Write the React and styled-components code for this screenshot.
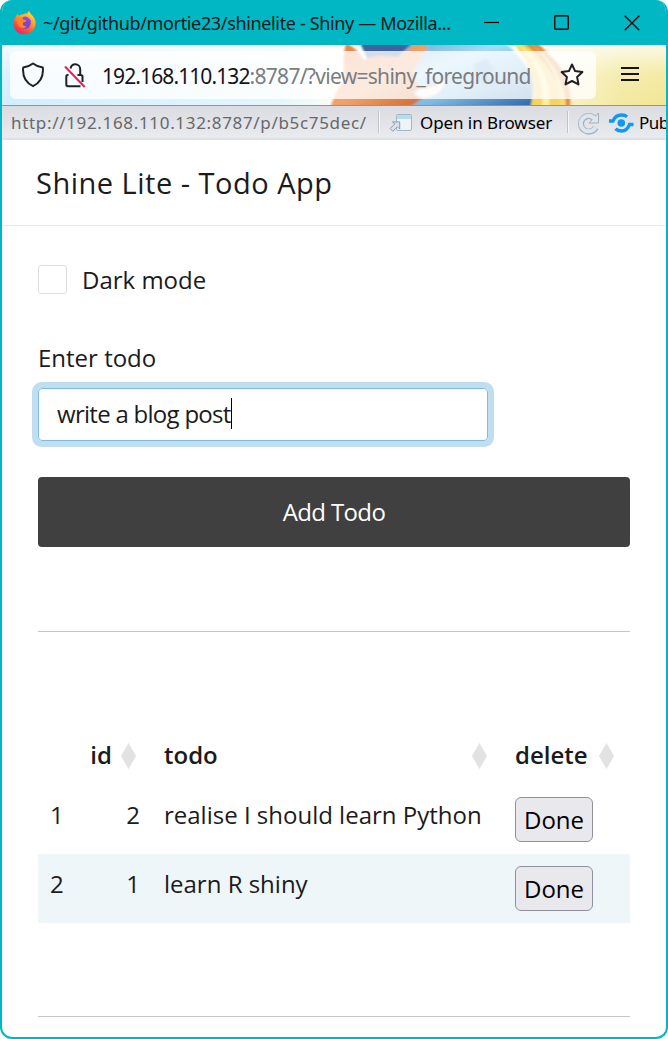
import React from "react";
import styled, { createGlobalStyle } from "styled-components";

const TEAL = "#00b7c3";

const GlobalStyle = createGlobalStyle`
  *, *::before, *::after { box-sizing: border-box; }
  html, body { margin: 0; padding: 0; background: #fff; overflow: hidden; }
  body { font-family: "Open Sans", "Noto Sans", sans-serif; color: #1b1b1b; }
  svg { display: block; flex: none; }
`;

const Window = styled.div`
  width: 668px;
  height: 1039px;
  display: flex;
  flex-direction: column;
  border: 2px solid ${TEAL};
  border-top: 0;
  border-radius: 12px;
  background: #fff;
  overflow: hidden;
`;

const TitleBar = styled.header`
  height: 45px;
  flex: none;
  display: flex;
  align-items: center;
  margin: 0 -2px;
  padding-left: 13px;
  background: ${TEAL};
`;

const WindowTitle = styled.div`
  width: 418px;
  margin-left: 7px;
  font-family: "Noto Sans", sans-serif;
  font-size: 18px;
  line-height: 24px;
  letter-spacing: -0.35px;
  color: #0b1a1c;
  white-space: nowrap;
`;

const WindowControls = styled.div`
  display: flex;
  align-items: center;
  gap: 55px;
  margin-left: 23px;
`;

const AddressBar = styled.div`
  position: relative;
  height: 61px;
  flex: none;
  display: flex;
  align-items: center;
  padding: 0 27px 0 8px;
  border-bottom: 1px solid #8d969e;
`;

const ThemeArt = styled.svg`
  position: absolute;
  inset: 0;
`;

const UrlField = styled.div`
  position: relative;
  width: 586px;
  height: 48px;
  display: flex;
  align-items: center;
  padding: 0 12px 0 11px;
  border-radius: 6px;
  background: rgba(255, 255, 255, 0.78);
`;

const UrlText = styled.div`
  flex: 1;
  margin: 2px 0 0 16px;
  font-family: "Noto Sans", sans-serif;
  font-size: 21px;
  line-height: 28px;
  letter-spacing: -0.7px;
  white-space: nowrap;
  color: #7b7c80;
`;

const Host = styled.span`
  color: #15141a;
  letter-spacing: -0.9px;
`;

const MenuButton = styled.div`
  position: relative;
  margin: 0 0 2px auto;
`;

const ViewerBar = styled.div`
  height: 34px;
  flex: none;
  display: flex;
  align-items: center;
  padding-left: 9px;
  background: linear-gradient(#dbdce1, #e9ebef);
  border-bottom: 2px solid #dde0e5;
  font-family: "Noto Sans", sans-serif;
  font-size: 17px;
  line-height: 24px;
  color: #000;
  white-space: nowrap;
  overflow: hidden;
`;

const ViewerText = styled.span`
  flex: none;
  width: ${(p) => p.$width}px;
  padding-top: 2px;
  color: ${(p) => p.$color || "#000"};
  letter-spacing: ${(p) => p.$spacing || 0}px;
`;

const Divider = styled.i`
  width: 2px;
  height: 22px;
  flex: none;
  border-left: 1px solid #c0c3c8;
  border-right: 1px solid #f4f5f7;
`;

const IconSlot = styled.span`
  flex: none;
  margin: 2px ${(p) => p.$right}px 0 ${(p) => p.$left}px;
`;

const AppHeader = styled.h1`
  height: 86px;
  flex: none;
  margin: 0;
  padding: 0 34px;
  border-bottom: 1px solid #e7e9ee;
  font-size: 29px;
  font-weight: 400;
  line-height: 86px;
  letter-spacing: 0.5px;
`;

const Main = styled.main`
  display: flex;
  flex-direction: column;
  padding: 39px 36px 0;
  font-size: 24px;
`;

const CheckRow = styled.label`
  display: flex;
  align-items: center;
  gap: 15px;
  height: 29px;
  line-height: 32px;
`;

const Checkbox = styled.span`
  width: 29px;
  height: 29px;
  border: 1px solid #dcdee4;
  border-radius: 3px;
`;

const CheckText = styled.span`
  padding-top: 1px;
`;

const FieldLabel = styled.label`
  margin-top: 47px;
  line-height: 34px;
`;

const TextField = styled.div`
  width: 450px;
  height: 53px;
  margin-top: 13px;
  display: flex;
  align-items: center;
  padding: 0 0 2px 18px;
  border: 1px solid #7fbbe0;
  border-radius: 4px;
  box-shadow: 0 0 0 6px #bfdff0;
  letter-spacing: -0.72px;
`;

const Caret = styled.i`
  width: 1px;
  height: 31px;
  background: #000;
`;

const SubmitButton = styled.button`
  height: 70px;
  margin-top: 36px;
  border: 0;
  border-radius: 4px;
  background: #404040;
  color: #fff;
  font: 400 24px/34px "Open Sans", sans-serif;
  letter-spacing: -0.65px;
`;

const Rule = styled.hr`
  width: 100%;
  height: 1px;
  margin: ${(p) => p.$top}px 0 0;
  border: 0;
  background: #c6c6c6;
`;

const Table = styled.table`
  width: 592px;
  margin-top: 94px;
  border-collapse: collapse;
  table-layout: fixed;
`;

const HeadRow = styled.tr`
  height: 59px;
`;

const HeadCell = styled.th`
  width: ${(p) => p.$width}px;
  padding: 0 ${(p) => p.$right || 0}px 0 12px;
  font-weight: 600;
  line-height: 34px;
  text-align: left;
`;

const HeadContent = styled.div`
  display: flex;
  align-items: center;
  gap: 9px;
  justify-content: ${(p) => p.$justify};
`;

const HeadLabel = styled.span`
  margin-top: -2px;
`;

const BodyRow = styled.tr`
  height: 69px;
  background: ${(p) => (p.$striped ? "#eef6fa" : "transparent")};
`;

const Cell = styled.td`
  padding: 13px 12px 0;
  line-height: 34px;
  vertical-align: top;
  white-space: nowrap;
  text-align: ${(p) => p.$align || "left"};
`;

const ActionCell = styled.td`
  padding: 12px 12px 0;
  vertical-align: top;
`;

const DoneButton = styled.button`
  display: block;
  width: 78px;
  height: 45px;
  padding: 1px 0 0;
  border: 1px solid #8f8f9d;
  border-radius: 6px;
  background: #e9e9ed;
  color: #000;
  font: 400 24px/34px "Open Sans", sans-serif;
`;

const Firefox = () => (
  <svg width="23" height="24" viewBox="0 0 23 24">
    <defs>
      <linearGradient id="flame" x1="0.85" y1="0.05" x2="0.3" y2="1">
        <stop offset="0" stopColor="#ffe43b" />
        <stop offset="0.4" stopColor="#ff9a28" />
        <stop offset="0.75" stopColor="#ff4a3d" />
        <stop offset="1" stopColor="#ed1f73" />
      </linearGradient>
    </defs>
    <path d="M3.200 5c.2-1 .8-2 1.500-2.600.1 1 .6 1.600 1.200 2.300 1-.8 2.500-1.400 4-1.500C11.300 2.500 13 2.200 14.500 2.500 14.600 1.500 15.400.6 16.200 0c.2 3.200 4.800 4 6.100 9.500C23.800 17 18.500 23.300 11.500 23.300 4.800 23.300.3 18 .4 12.500.5 9.500 1.500 6.800 3.200 5Z" fill="url(#flame)" />
    <circle cx="12" cy="12.300" r="5.600" fill="#7a45d8" />
    <path d="M10 7c3-1.500 7 .6 7.400 4.500" fill="none" stroke="#a04ae8" strokeWidth="1.800" />
    <path d="M3 8c2.500-2 5.500-1.300 7.600.6 1.700.1 2.800.5 2.900 1.100-.5 1.100-2.300 1.300-3.200 2.100-1.300 1.300.2 3.800 3.200 3.600-2 2.400-7 2-8.500-1.400C4.200 12 4 9.800 3 8Z" fill="#ff8427" />
  </svg>
);

const Minimize = () => (
  <svg width="15" height="16" viewBox="0 0 15 16"><path d="M0 7.500h15" stroke="#000" strokeWidth="1.200" /></svg>
);
const Maximize = () => (
  <svg width="15" height="15" viewBox="0 0 15 15"><rect x=".75" y=".75" width="13.500" height="13.500" rx="1" fill="none" stroke="#000" strokeWidth="1.300" /></svg>
);
const Close = () => (
  <svg width="16" height="16" viewBox="0 0 16 16"><path d="M.7.7l14.600 14.600M15.300.7L.7 15.300" stroke="#000" strokeWidth="1.300" /></svg>
);

const Artwork = () => (
  <ThemeArt width="664" height="60" viewBox="2 45 664 60">
    <defs>
      <linearGradient id="sky">
        <stop offset="0" stopColor="#d3eefe" />
        <stop offset=".42" stopColor="#e4f6fb" />
        <stop offset=".5" stopColor="#fbfdf6" />
        <stop offset=".83" stopColor="#fbf5d0" />
        <stop offset=".93" stopColor="#f3e9a2" />
        <stop offset="1" stopColor="#f3e695" />
      </linearGradient>
      <linearGradient id="shine" x1="0" x2="0" y1="0" y2="1">
        <stop offset="0" stopColor="#fff" stopOpacity=".75" />
        <stop offset=".5" stopColor="#fff" stopOpacity=".15" />
        <stop offset="1" stopColor="#fff" stopOpacity="0" />
      </linearGradient>
      <linearGradient id="globe" x1="0" x2="1" y1="0" y2="1">
        <stop offset="0" stopColor="#5c92c4" />
        <stop offset=".4" stopColor="#a5dcf5" />
        <stop offset=".65" stopColor="#7cb8e2" />
        <stop offset="1" stopColor="#205a9c" />
      </linearGradient>
      <linearGradient id="fur" x1="0" x2="1" y1="0" y2="1">
        <stop offset="0" stopColor="#e97c3c" />
        <stop offset=".5" stopColor="#f0a36c" />
        <stop offset="1" stopColor="#c8541c" />
      </linearGradient>
      <filter id="soft" x="-5%" y="-5%" width="110%" height="110%">
        <feGaussianBlur stdDeviation="1.200" />
      </filter>
    </defs>
    <rect x="2" y="45" width="664" height="60" fill="url(#sky)" />
    <rect x="2" y="45" width="664" height="60" fill="url(#shine)" />
    <g filter="url(#soft)">
      <path d="M360 43H505c20 16 34 40 36 66H400c0-20-20-40-40-66Z" fill="url(#globe)" />
      <path d="M360 43h52l-14 14c-12-1-22 0-30 3Z" fill="#40639c" />
      <path d="M474 64l12-5 8 9-5 8 10 5-7 9-11-6-6-9Z" fill="#6faad8" />
      <path d="M346 43c6 2 13 9 18 17 9-5 22-5 32-2 7-4 14-10 20-15h13c-4 12-11 20-16 28 2 9 4 13 8 16 8-1 16-3 24-8-1 12-9 17-20 19-7 2-12 8-18 11h-77c3-11 8-22 15-29-2-13-2-25 1-37Z" fill="url(#fur)" />
      <path d="M419 89c8 0 17-3 26-10-1 11-8 17-20 19-6 0-9-3-11-5Z" fill="#fff3e4" />
      <path d="M513 43h16c18 16 31 38 35 66h-34c7-24 1-46-17-66Z" fill="#f6d35b" />
      <path d="M516 43c21 18 29 40 26 66h7c3-27-9-52-33-66Z" fill="#fff0a0" />
      <path d="M523 43h15c12 13 23 22 27 32 5 10 6 21 5 34h-6c-3-27-18-49-41-66Z" fill="#e48b3f" />
      <path d="M529 43c20 14 31 38 32 66h5c0-27-13-50-37-66Z" fill="#f6dd72" />
    </g>
  </ThemeArt>
);

const Shield = () => (
  <svg width="24" height="26" viewBox="0 0 24 26"><path d="M12 1.500c2.800 2.200 6 3.400 9.800 4 .8 8-1.800 15-9.800 18.700C4 20.500 1.400 13.500 2.200 5.500 6 4.900 9.200 3.700 12 1.500Z" fill="none" stroke="#202124" strokeWidth="2" strokeLinejoin="round" /></svg>
);
const BrokenLock = () => (
  <svg width="22" height="26" viewBox="0 0 22 26" fill="none">
    <path d="M4.500 12H3.800Q2.300 12 2.300 13.500V21.500Q2.300 23.300 4 23.300H16.500M6.500 5.500C7.200 2.700 9 1.300 11.200 1.300c2.800 0 5 2 5 5V12M13.500 12h3.200Q18.500 12 18.500 13.700V19" stroke="#202124" strokeWidth="2" />
    <path d="M1 3.500L20.700 24" stroke="#f01d55" strokeWidth="2" />
  </svg>
);
const Star = () => (
  <svg width="24" height="24" viewBox="0 0 24 24"><path d="M12 1.500l3.100 6.600 7.300 1-5.300 5 1.400 7.300L12 18l-6.500 3.400 1.400-7.300-5.300-5 7.300-1Z" fill="none" stroke="#202124" strokeWidth="2" strokeLinejoin="round" /></svg>
);
const Hamburger = () => (
  <svg width="18" height="16" viewBox="0 0 18 16"><path d="M0 2h18M0 8h18M0 14h18" stroke="#15141a" strokeWidth="2" /></svg>
);
const OpenWindow = () => (
  <svg width="24" height="18" viewBox="0 0 24 18">
    <rect x="7.500" y=".5" width="15" height="16" rx="1.500" fill="#edf3f7" stroke="#a0b8c6" />
    <path d="M8 1h14v4H8z" fill="#b9dbea" />
    <path d="M1.200 14.500l4.600-4.600-2.300-2h7.200v7.200l-2.300-2.300-4.600 4.500Z" fill="#dbe3ea" stroke="#8b9cad" />
  </svg>
);
const Refresh = () => (
  <svg width="23" height="23" viewBox="0 0 23 23" fill="none">
    <path d="M17.800 6.800A7.800 7.800 0 1 0 18.700 15.500" stroke="#a3b0bf" strokeWidth="6" />
    <path d="M21.500 1v10h-9.500Z" fill="#dee5ed" stroke="#a3b0bf" />
    <path d="M17.800 6.800A7.800 7.800 0 1 0 18.500 15.200" stroke="#dee5ee" strokeWidth="4" />
  </svg>
);
const PublishIcon = () => (
  <svg width="25" height="20" viewBox="0 0 25 20" fill="none" stroke="#0f9af0" strokeWidth="3.400">
    <circle cx="12.300" cy="10" r="3.800" fill="#0f9af0" stroke="none" />
    <path d="M0 8h4C5.500 4 8.500 2 12.500 2c2.400 0 4.200.6 5.600 1.800M24.500 11.500h-4C19 15.800 16 18 12.500 18c-2.400 0-4.600-.8-6-2.200" />
  </svg>
);
const SortMark = () => (
  <svg width="15" height="26" viewBox="0 0 15 26"><path d="M7.500 0L15 13L7.500 26L0 13Z" fill="#e2e2e2" /></svg>
);

const columns = [
  { label: "id", width: 77, right: 16, justify: "flex-end" },
  { label: "todo", width: 351, right: 16, justify: "space-between" },
  { label: "delete", width: 127, right: 16, justify: "space-between" },
];

const todos = [
  { id: 2, text: "realise I should learn Python" },
  { id: 1, text: "learn R shiny" },
];

export default function App() {
  return (
    <>
      <GlobalStyle />
      <Window>
        <TitleBar>
          <Firefox />
          <WindowTitle>~/git/github/mortie23/shinelite - Shiny — Mozilla...</WindowTitle>
          <WindowControls>
            <Minimize />
            <Maximize />
            <Close />
          </WindowControls>
        </TitleBar>
        <AddressBar>
          <Artwork />
          <UrlField>
            <Shield />
            <IconSlot $left={19} $right={0}><BrokenLock /></IconSlot>
            <UrlText><Host>192.168.110.132</Host>:8787/?view=shiny_foreground</UrlText>
            <Star />
          </UrlField>
          <MenuButton><Hamburger /></MenuButton>
        </AddressBar>
        <ViewerBar>
          <ViewerText $width={367} $color="#66686c" $spacing={0.67}>http://192.168.110.132:8787/p/b5c75dec/</ViewerText>
          <Divider />
          <IconSlot $left={9} $right={7}><OpenWindow /></IconSlot>
          <ViewerText $width={147} $spacing={-0.08}>Open in Browser</ViewerText>
          <Divider />
          <IconSlot $left={8} $right={9}><Refresh /></IconSlot>
          <IconSlot $left={0} $right={5}><PublishIcon /></IconSlot>
          <ViewerText $width={26} $spacing={-0.5}>Pub</ViewerText>
        </ViewerBar>
        <AppHeader>Shine Lite - Todo App</AppHeader>
        <Main>
          <CheckRow>
            <Checkbox />
            <CheckText>Dark mode</CheckText>
          </CheckRow>
          <FieldLabel>Enter todo</FieldLabel>
          <TextField>write a blog post<Caret /></TextField>
          <SubmitButton>Add Todo</SubmitButton>
          <Rule $top={84} />
          <Table>
            <thead>
              <HeadRow>
                <HeadCell $width={37} />
                {columns.map((c) => (
                  <HeadCell key={c.label} $width={c.width} $right={c.right}>
                    <HeadContent $justify={c.justify}>
                      <HeadLabel>{c.label}</HeadLabel>
                      <SortMark />
                    </HeadContent>
                  </HeadCell>
                ))}
              </HeadRow>
            </thead>
            <tbody>
              {todos.map((t, i) => (
                <BodyRow key={t.id} $striped={i % 2 === 1}>
                  <Cell>{i + 1}</Cell>
                  <Cell $align="right">{t.id}</Cell>
                  <Cell>{t.text}</Cell>
                  <ActionCell><DoneButton>Done</DoneButton></ActionCell>
                </BodyRow>
              ))}
            </tbody>
          </Table>
          <Rule $top={93} />
        </Main>
      </Window>
    </>
  );
}
